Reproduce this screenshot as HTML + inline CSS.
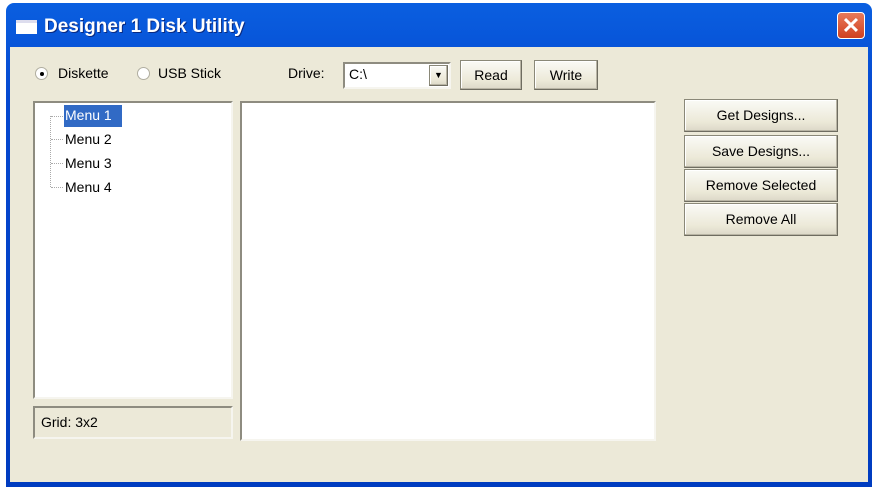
<!DOCTYPE html>
<html><head><style>
*{margin:0;padding:0;box-sizing:border-box}
body{width:880px;height:488px;background:#fff;position:relative;overflow:hidden;font-family:"Liberation Sans",sans-serif;font-size:14px;color:#000}
.abs{position:absolute}
.win{left:6px;top:3px;width:866px;height:484px;background:linear-gradient(#0a5fe0,#0548d0 20%,#003cc0);border-radius:8px 8px 0 0}
.body{left:10px;top:47px;width:858px;height:435px;background:#ece9d8}
.title{left:44px;top:16px;color:#fff;font-weight:bold;font-size:19px;text-shadow:1px 1px 0 #0a2a80}
.btn{position:absolute;background:linear-gradient(#fafaf6,#ece9d8 70%,#dcd8c8);border:1px solid #8a8878;border-right-color:#6e6c60;border-bottom-color:#6e6c60;box-shadow:inset -1px -1px 0 #b8b4a4,inset 1px 1px 0 #fff;text-align:center;font-size:14px}
.sunk{position:absolute;background:#fff;border:2px solid;border-color:#8e8c80 #f6f5ef #f6f5ef #8e8c80}
.radio{position:absolute;width:13px;height:13px;border-radius:50%;background:#fff;border:1px solid #b0aea0}
</style></head><body>
<div class="abs win"></div>
<div class="abs" style="left:16px;top:20px;width:21px;height:14px;background:#fff;border-top:3px solid #dde"></div>
<div class="abs title">Designer 1 Disk Utility</div>
<div class="abs" style="left:837px;top:12px;width:28px;height:27px;border:1px solid #fff;border-radius:4px;background:linear-gradient(#e87a5a,#d04020);color:#fff;font-size:22px;font-weight:bold;text-align:center;line-height:25px">✕</div>
<div class="abs body"></div>

<div class="radio" style="left:35px;top:67px"><div class="abs" style="left:4px;top:4px;width:4px;height:4px;border-radius:50%;background:#000"></div></div>
<div class="abs" style="left:58px;top:65px">Diskette</div>
<div class="radio" style="left:137px;top:67px"></div>
<div class="abs" style="left:158px;top:65px">USB Stick</div>

<div class="abs" style="left:288px;top:65px">Drive:</div>
<div class="sunk" style="left:343px;top:62px;width:108px;height:27px"><span class="abs" style="left:4px;top:2px">C:\</span>
<div class="btn" style="left:84px;top:1px;width:19px;height:21px;font-size:9px;line-height:19px">▼</div></div>
<div class="btn" style="left:460px;top:60px;width:62px;height:30px;line-height:28px">Read</div>
<div class="btn" style="left:534px;top:60px;width:64px;height:30px;line-height:28px">Write</div>

<div class="sunk" style="left:33px;top:101px;width:200px;height:298px"></div>
<div class="abs" style="left:50px;top:116px;width:1px;height:71px;border-left:1px dotted #aaa"></div>
<div class="abs" style="left:51px;top:116px;width:12px;border-top:1px dotted #aaa"></div>
<div class="abs" style="left:51px;top:139px;width:12px;border-top:1px dotted #aaa"></div>
<div class="abs" style="left:51px;top:163px;width:12px;border-top:1px dotted #aaa"></div>
<div class="abs" style="left:51px;top:187px;width:12px;border-top:1px dotted #aaa"></div>
<div class="abs" style="left:64px;top:105px;width:58px;height:22px;background:#316ac5;color:#fff;padding:2px 1px">Menu 1</div>
<div class="abs" style="left:65px;top:131px">Menu 2</div>
<div class="abs" style="left:65px;top:155px">Menu 3</div>
<div class="abs" style="left:65px;top:179px">Menu 4</div>

<div class="abs" style="left:33px;top:406px;width:200px;height:33px;border:2px solid;border-color:#8e8c80 #f6f5ef #f6f5ef #8e8c80;padding:6px 6px">Grid: 3x2</div>

<div class="sunk" style="left:240px;top:101px;width:416px;height:340px"></div>

<div class="btn" style="left:684px;top:99px;width:154px;height:33px;line-height:31px">Get Designs...</div>
<div class="btn" style="left:684px;top:135px;width:154px;height:33px;line-height:31px">Save Designs...</div>
<div class="btn" style="left:684px;top:169px;width:154px;height:33px;line-height:31px">Remove Selected</div>
<div class="btn" style="left:684px;top:203px;width:154px;height:33px;line-height:31px">Remove All</div>
</body></html>
